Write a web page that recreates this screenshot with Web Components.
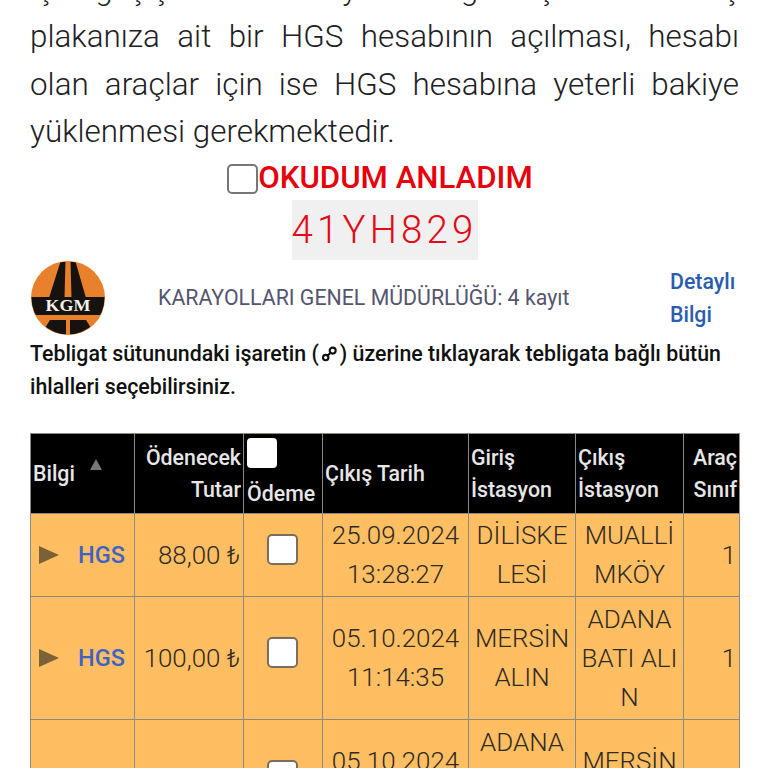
<!DOCTYPE html>
<html lang="tr">
<head>
<meta charset="utf-8">
<title>HGS</title>
<style>
  html, body { margin: 0; height: 768px; overflow: hidden; background: #fff; }
  body { font-family: Roboto, "Liberation Sans", sans-serif; }
  hint-text svg { width: 21px; height: 16px; vertical-align: -1px; }
</style>
</head>
<body>
<kgm-page>
  <notice-text>için geçiş tarihini izleyen 15 gün içerisinde araç plakanıza ait bir HGS hesabının açılması, hesabı olan araçlar için ise HGS hesabına yeterli bakiye yüklenmesi gerekmektedir.</notice-text>
  <read-confirm>OKUDUM ANLADIM</read-confirm>
  <plate-box>41YH829</plate-box>
  <agency-header link="Detaylı Bilgi">KARAYOLLARI GENEL MÜDÜRLÜĞÜ: 4 kayıt</agency-header>
  <hint-text>Tebligat sütunundaki işaretin (<svg viewBox="0 0 16 16" fill="none" stroke="#111" stroke-width="2.1"><circle cx="4.2" cy="11.6" r="2.7"/><circle cx="11.2" cy="4.6" r="3"/><path d="M6.2 9.6 L9 6.8"/></svg>) üzerine tıklayarak tebligata bağlı bütün ihlalleri seçebilirsiniz.</hint-text>
  <fee-table></fee-table>
</kgm-page>

<script>
// small helper so every element gets an open shadow root from a string
function shadow(el, html) {
  el.attachShadow({ mode: 'open' }).innerHTML = html;
}

class KgmPage extends HTMLElement {
  constructor() {
    super();
    shadow(this, `
      <style>
        :host { display: flex; flex-direction: column; margin-top: -34px; padding: 0 29px 0 30px; color: #212529; }
      </style>
      <slot></slot>`);
  }
}

class NoticeText extends HTMLElement {
  constructor() {
    super();
    shadow(this, `
      <style>
        :host { display: block; font: 300 31.4px/47.3px Roboto, sans-serif; text-align: justify; color: #1d2024; }
      </style>
      <slot></slot>`);
  }
}

class ReadConfirm extends HTMLElement {
  constructor() {
    super();
    shadow(this, `
      <style>
        :host { display: flex; justify-content: center; align-items: center; height: 48px; margin-top: -1px; margin-left: -9px; }
        .box { width: 31px; height: 30px; box-sizing: border-box; background: #fff; border: 2px solid #767676; border-radius: 5px; margin-top: 2px; }
        .label { font: 500 31.2px/48px Roboto, sans-serif; color: #e8000b; }
      </style>
      <div class="box"></div>
      <div class="label"><slot></slot></div>`);
  }
}

class PlateBox extends HTMLElement {
  constructor() {
    super();
    shadow(this, `
      <style>
        :host { display: block; width: max-content; margin: -2px auto 0; }
        div { background: #f0f0f0; color: #e30a17; font: 300 38.4px/60px Roboto, sans-serif; letter-spacing: 4.2px; width: 186px; box-sizing: border-box; white-space: nowrap; }
      </style>
      <div><slot></slot></div>`);
  }
}

class AgencyHeader extends HTMLElement {
  constructor() {
    super();
    const [a, b] = this.getAttribute('link').split(' ');
    shadow(this, `
      <style>
        :host { display: flex; align-items: center; height: 74px; margin-top: 1px; }
        svg { width: 76px; height: 76px; flex: none; }
        .title { flex: 1; padding-left: 52px; font: 400 21.33px/30px Roboto, sans-serif; color: #55556f; white-space: nowrap; }
        .link { flex: none; width: 69px; font: 500 21.33px/33px Roboto, sans-serif; color: #2a5db0; }
      </style>
      <svg viewBox="0 0 76 76">
        <circle cx="38" cy="38" r="37" fill="#e8802c"/>
        <clipPath id="c"><circle cx="38" cy="38" r="36.5"/></clipPath>
        <g clip-path="url(#c)" fill="#15120f">
          <path d="M31 0 L35.5 0 L34.5 38 L19 38Z"/>
          <path d="M40.5 0 L45 0 L56 38 L41.5 38Z"/>
          <path d="M0 37 H76 V55 H0Z"/>
          <path d="M20 60 H36 V76 H10Z"/>
          <path d="M40 60 H56 L66 76 H40Z"/>
        </g>
        <text x="38" y="50.5" text-anchor="middle" font-family="Liberation Serif, serif" font-weight="700" font-size="16" textLength="45" lengthAdjust="spacingAndGlyphs" fill="#f2f0ea">KGM</text>
      </svg>
      <div class="title"><slot></slot></div>
      <div class="link">${a}<br>${b}</div>`);
  }
}

class HintText extends HTMLElement {
  constructor() {
    super();
    shadow(this, `
      <style>
        :host { display: block; font: 500 21.33px/33px Roboto, sans-serif; color: #111; margin-top: 2px; }
      </style>
      <slot></slot>`);
  }
}

const FEE_ROWS = [
  { tutar: '88,00 ₺', tarih: ['25.09.2024', '13:28:27'], giris: 'DİLİSKE<br>LESİ', cikis: 'MUALLİ<br>MKÖY', sinif: '1', h: 83 },
  { tutar: '100,00 ₺', tarih: ['05.10.2024', '11:14:35'], giris: 'MERSİN<br>ALIN', cikis: 'ADANA<br>BATI ALI<br>N', sinif: '1', h: 123 },
  { tutar: '100,00 ₺', tarih: ['05.10.2024', '17:42:10'], giris: 'ADANA<br>BATI ALI<br>N', cikis: 'MERSİN<br>ALIN', sinif: '1', h: 123 }
];

class FeeTable extends HTMLElement {
  constructor() {
    super();
    const rows = FEE_ROWS.map(r => `
      <tr style="height:${r.h}px">
        <td class="bilgi"><div><i></i><b>HGS</b></div></td>
        <td class="right">${r.tutar}</td>
        <td class="check"><span class="box"></span></td>
        <td>${r.tarih.join('<br>')}</td>
        <td>${r.giris}</td>
        <td>${r.cikis}</td>
        <td class="right">${r.sinif}</td>
      </tr>`).join('');
    shadow(this, `
      <style>
        :host { display: block; margin-top: 30px; }
        table { border-collapse: collapse; table-layout: fixed; width: 709px; background: #ffbe62; }
        th, td { border: 1px solid #8f8a80; padding: 0 2px; }
        th { box-sizing: border-box; height: 80px; background: #000; color: #e6e6e6; font: 500 21.33px/32px Roboto, sans-serif; text-align: left; white-space: nowrap; }
        td { font: 300 25.9px/39px Roboto, sans-serif; color: #2e2a22; text-align: center; padding: 0; overflow: hidden; }
        th.right, td.right { text-align: right; padding-right: 2px; }
        td.right { padding-right: 3px; }
        th .sort { display: inline-block; margin: 0 0 11px 15px; border: 6px solid transparent; border-top: 0; border-bottom: 11px solid #777; }
        th .all { display: block; width: 30px; height: 30px; background: #fff; border-radius: 4px; margin-bottom: 10px; }
        th.odeme { padding: 4px 0 0 3px; vertical-align: top; }
        .bilgi div { display: flex; align-items: center; padding: 0 8px; }
        .bilgi i { border-left: 20px solid #7b6136; border-top: 9.5px solid transparent; border-bottom: 9.5px solid transparent; }
        .bilgi b { font: 500 23.5px/39px Roboto, sans-serif; color: #3f63c4; margin-left: 19px; }
        td.check { padding: 0 2px 12px 0; }
        .box { display: block; width: 31px; height: 31px; box-sizing: border-box; margin: 0 auto; background: #fff; border: 2px solid #7a6f5d; border-radius: 5px; }
      </style>
      <table>
        <colgroup><col style="width:104px"><col style="width:109px"><col style="width:79px"><col style="width:146px"><col style="width:107px"><col style="width:108px"><col style="width:56px"></colgroup>
        <tr>
          <th>Bilgi<span class="sort"></span></th>
          <th class="right">Ödenecek<br>Tutar</th>
          <th class="odeme"><span class="all"></span>Ödeme</th>
          <th>Çıkış Tarih</th>
          <th>Giriş<br>İstasyon</th>
          <th>Çıkış<br>İstasyon</th>
          <th class="right">Araç<br>Sınıf</th>
        </tr>
        ${rows}
      </table>`);
  }
}

customElements.define('kgm-page', KgmPage);
customElements.define('notice-text', NoticeText);
customElements.define('read-confirm', ReadConfirm);
customElements.define('plate-box', PlateBox);
customElements.define('agency-header', AgencyHeader);
customElements.define('hint-text', HintText);
customElements.define('fee-table', FeeTable);
</script>
</body>
</html>
